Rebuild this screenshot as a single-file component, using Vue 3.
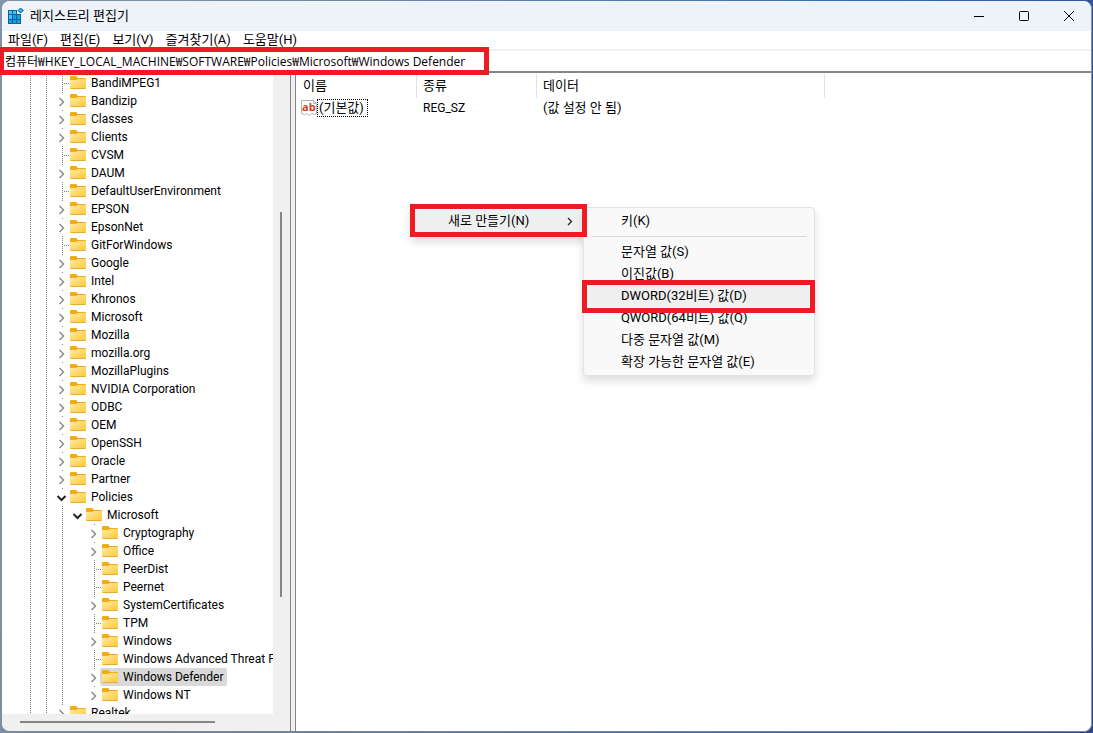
<script setup>
const menus = ['파일(F)', '편집(E)', '보기(V)', '즐겨찾기(A)', '도움말(H)']

const row = (label, level = 0, state = 'closed') => ({ label, level, state })
const rows = [
  row('BandiMPEG1', 0, 'leaf'),
  row('Bandizip'),
  row('Classes'),
  row('Clients'),
  row('CVSM', 0, 'leaf'),
  row('DAUM'),
  row('DefaultUserEnvironment', 0, 'leaf'),
  row('EPSON'),
  row('EpsonNet'),
  row('GitForWindows', 0, 'leaf'),
  row('Google'),
  row('Intel'),
  row('Khronos'),
  row('Microsoft'),
  row('Mozilla'),
  row('mozilla.org'),
  row('MozillaPlugins'),
  row('NVIDIA Corporation'),
  row('ODBC'),
  row('OEM'),
  row('OpenSSH'),
  row('Oracle'),
  row('Partner'),
  row('Policies', 0, 'open'),
  row('Microsoft', 1, 'open'),
  row('Cryptography', 2),
  row('Office', 2),
  row('PeerDist', 2, 'leaf'),
  row('Peernet', 2, 'leaf'),
  row('SystemCertificates', 2),
  row('TPM', 2, 'leaf'),
  row('Windows', 2),
  row('Windows Advanced Threat Protection', 2, 'leaf'),
  row('Windows Defender', 2),
  row('Windows NT', 2),
  row('Realtek'),
]
const selected = 33

// Each guide cell is either a dotted line or blank when the ancestor is a last child.
const guides = (level) => [true, true, true, false].slice(0, 2 + level)

const valueTypes = [
  '문자열 값(S)',
  '이진값(B)',
  'DWORD(32비트) 값(D)',
  'QWORD(64비트) 값(Q)',
  '다중 문자열 값(M)',
  '확장 가능한 문자열 값(E)',
]
const address = '컴퓨터₩HKEY_LOCAL_MACHINE₩SOFTWARE₩Policies₩Microsoft₩Windows Defender'
</script>

<template>
  <div class="desktop">
    <main class="window">
      <header class="titlebar">
        <svg class="app-icon" width="16" height="16" viewBox="0 0 16 16" aria-hidden="true">
          <path d="M0 2h9v4h4v10H0z" fill="#0b62a0" />
          <path d="M1 3h3v3H1zM5 3h3v3H5zM1 7h3v4H1z" fill="#4cc4f2" />
          <path d="M5 7h3v4H5zM9 7h3v4H9zM1 12h3v3H1zM5 12h3v3H5zM9 12h3v3H9z" fill="#18a0dc" />
          <path d="M12.500 0L15.500 2.500L12.500 5L10 2.500z" fill="#2fb0e6" stroke="#0b6fb0" />
        </svg>
        <h1>레지스트리 편집기</h1>
        <div class="controls">
          <button aria-label="최소화"><svg width="12" height="12"><path d="M1 6.500h10" /></svg></button>
          <button aria-label="최대화"><svg width="12" height="12"><rect x="1.500" y="1.500" width="9" height="9" rx="1" /></svg></button>
          <button aria-label="닫기"><svg width="12" height="12"><path d="M1 1l10 10M11 1L1 11" /></svg></button>
        </div>
      </header>

      <nav class="menubar">
        <button v-for="m in menus" :key="m">{{ m }}</button>
      </nav>

      <div class="address">
        <input type="text" :value="address" aria-label="주소" spellcheck="false" />
        <span class="mark"></span>
      </div>

      <div class="panes">
        <section class="left">
          <div class="tree-area">
            <ul class="tree" role="tree">
              <li v-for="(r, i) in rows" :key="i" role="treeitem" :aria-selected="i === selected">
                <span v-for="(g, k) in guides(r.level)" :key="k" class="guide" :class="{ line: g }"></span>
                <svg class="toggle" :class="r.state" width="16" height="18" viewBox="0 0 16 18" aria-hidden="true">
                  <template v-if="r.state === 'leaf'">
                    <path class="dots" d="M8.500 0v18" />
                    <path class="dots" d="M10 9.500h6" />
                  </template>
                  <template v-else>
                    <path v-if="r.level !== 1" class="dots" d="M8.500 0v1" />
                    <path v-if="r.state === 'closed'" class="chevron" d="M5.500 6l4 4l-4 4" />
                    <path v-else class="chevron" d="M3.500 8l4 4l4-4" />
                  </template>
                </svg>
                <button class="key" :class="{ selected: i === selected }">
                  <svg width="16" height="14" viewBox="0 0 16 14" aria-hidden="true">
                    <path d="M0 1q0-1 1-1h5l2 2h7q1 0 1 1v2H0z" fill="#f0ac12" />
                    <path d="M0 4.500q0-.5.5-.5H6l2-1h7.500q.5 0 .5.500V12q0 1-1 1H1q-1 0-1-1z" fill="url(#folder)" />
                    <path d="M.5 12.500h15" stroke="#e8ac2c" />
                  </svg>
                  <span>{{ r.label }}</span>
                </button>
              </li>
            </ul>
            <div class="vscroll"><span></span></div>
          </div>
          <div class="hscroll"><span></span></div>
        </section>
        <section class="right">
          <table>
            <thead>
              <tr><th>이름</th><th>종류</th><th>데이터</th></tr>
            </thead>
            <tbody>
              <tr>
                <td class="name">
                  <div>
                    <svg width="16" height="16" viewBox="0 0 16 16" aria-hidden="true">
                      <path d="M.5.500h12l3 3v10l-2 1l-3-1l-2 2l-3-2l-2 1l-3-1z" fill="#fff" stroke="#b4b4b4" />
                      <path d="M12.500.500v3h3" fill="none" stroke="#b4b4b4" />
                      <text x="1" y="11">ab</text>
                    </svg>
                    <span class="focus">(기본값)</span>
                  </div>
                </td>
                <td class="type">REG_SZ</td>
                <td>(값 설정 안 됨)</td>
              </tr>
            </tbody>
          </table>
        </section>
      </div>
    </main>

    <div class="context">
      <button>새로 만들기(N)
        <svg width="8" height="10" viewBox="0 0 8 10" aria-hidden="true"><path d="M2 2l3.500 3.500L2 9" /></svg>
      </button>
      <span class="mark"></span>
    </div>

    <div class="submenu">
      <button>키(K)</button>
      <hr />
      <div v-for="(t, i) in valueTypes" :key="t" class="entry">
        <button :class="{ hot: i === 2 }">{{ t }}</button>
        <span v-if="i === 2" class="mark"></span>
      </div>
    </div>

    <svg width="0" height="0" class="defs" aria-hidden="true">
      <defs>
        <linearGradient id="folder" x1="0" y1="0" x2="1" y2="1">
          <stop offset="0" stop-color="#ffe9a6" />
          <stop offset="1" stop-color="#ffc937" />
        </linearGradient>
      </defs>
    </svg>
  </div>
</template>

<style>
body { margin: 0; overflow: hidden; }
</style>

<style scoped>
* { box-sizing: border-box; }
button, input {
  font: inherit;
  color: inherit;
  border: 0;
  padding: 0;
  margin: 0;
  background: none;
  text-align: left;
  white-space: nowrap;
}
.desktop {
  position: relative;
  height: 100vh;
  padding: 1px 1px 1px 2px;
  background: linear-gradient(100deg, #8094a8, #7088a4 30%, #3a6cb0 70%, #2c4890);
  font-family: Roboto, "Noto Sans CJK KR", sans-serif;
  font-size: 13px;
  line-height: 18px;
  color: #000;
}
.window {
  height: 100%;
  display: flex;
  flex-direction: column;
  background: #fff;
  border-right: 1px solid #8a9099;
  border-bottom: 1px solid #7f858c;
  border-radius: 8px;
}
.titlebar {
  flex: none;
  height: 30px;
  display: flex;
  align-items: center;
  padding-left: 6px;
  background: #eef3f9;
  border-radius: 8px 8px 0 0;
}
h1 { margin: 0 0 0 6px; font-size: 13px; font-weight: 400; line-height: 18px; }
.controls { margin-left: auto; display: flex; }
.controls button { width: 45px; height: 30px; display: grid; place-items: center; }
.controls path, .controls rect { fill: none; stroke: #000; }
.menubar { flex: none; display: flex; gap: 12px; height: 18px; padding-left: 6px; }
.address {
  position: relative;
  flex: none;
  height: 24px;
  border-top: 2px solid #efefef;
  border-bottom: 2px solid #80868c;
  font-family: "Open Sans", "Noto Sans CJK KR", sans-serif;
  font-size: 12px;
}
.address input { display: block; width: 100%; height: 20px; padding-left: 3px; outline: 0; }
.mark { position: absolute; border: 5px solid #ed1c24; pointer-events: none; z-index: 2; }
.address .mark { left: -3px; top: -4px; width: 490px; height: 28px; }
.panes { flex: 1; min-height: 0; display: flex; background: #f0f0f0; gap: 4px; border-radius: 0 0 8px 8px; overflow: hidden; }
.left { flex: none; width: 289px; display: flex; flex-direction: column; border-right: 1px solid #80868c; }
.tree-area { flex: 1; min-height: 0; display: flex; }
.tree {
  flex: 1;
  min-width: 0;
  margin: 0;
  padding: 1px 0 0 20px;
  list-style: none;
  overflow: hidden;
  background: #fff;
}
.tree li { display: flex; height: 18px; }
.guide { flex: none; width: 16px; }
.guide.line {
  background: repeating-linear-gradient(#808080 0 1px, transparent 1px 2px) 8px 0 / 1px 100% no-repeat;
}
.toggle { flex: none; }
.dots { stroke: #808080; stroke-dasharray: 1 1; fill: none; shape-rendering: crispEdges; }
.chevron { fill: none; stroke: #8c8c8c; stroke-width: 1.5; }
.open .chevron { stroke: #222; stroke-width: 2; }
.key {
  display: flex;
  align-items: center;
  gap: 5px;
  height: 18px;
  margin-left: -2px;
  padding: 0 4px 0 2px;
  border-radius: 2px;
  font-size: 12px;
}
.key svg { flex: none; }
.key.selected { background: #d9d9d9; }
.vscroll { flex: none; width: 17px; padding: 139px 0 0 7px; }
.vscroll span { display: block; width: 2px; height: 385px; background: #858585; }
.hscroll { flex: none; height: 17px; padding: 7px 0 0 18px; }
.hscroll span { display: block; width: 195px; height: 2px; background: #858585; }
.right { flex: 1; min-width: 0; background: #fff; border-left: 1px solid #80868c; }
table { border-collapse: separate; border-spacing: 0; table-layout: fixed; width: 529px; margin-top: 1px; }
th { width: 120px; height: 24px; font-weight: 400; text-align: left; padding: 0 0 0 6px; border-right: 1px solid #e2e2e2; }
th:first-child { width: 121px; padding-left: 7px; }
th:last-child { width: 288px; }
td { padding: 0 0 0 6px; height: 20px; white-space: nowrap; }
td.name { padding-left: 5px; }
td.type { font-size: 12px; }
.name div { display: flex; align-items: center; }
.name text { font: bold 11px "Open Sans", sans-serif; fill: #d4401a; }
.focus { padding: 0 4px 0 2px; outline: 1px dotted #000; outline-offset: -1px; }
.context {
  position: absolute;
  left: 410px;
  top: 204px;
  width: 177px;
  height: 33px;
  padding: 6px 5px 5px;
  background: #f9f9f9;
  box-shadow: 0 5px 8px #0002;
}
.context .mark { inset: 0; }
.context button {
  width: 100%;
  height: 22px;
  padding: 0 8px 0 33px;
  display: flex;
  align-items: center;
  justify-content: space-between;
  border-radius: 3px;
  background: #efefef;
}
.context path { fill: none; stroke: #222; stroke-width: 1.3; }
.submenu {
  position: absolute;
  left: 583px;
  top: 207px;
  width: 232px;
  padding: 2px 5px;
  background: #f9f9f9;
  border: 1px solid #e3e3e3;
  border-radius: 4px;
  box-shadow: 0 5px 8px #0002;
}
.submenu button { display: block; width: 100%; height: 22px; padding-left: 32px; border-radius: 4px; }
.submenu hr { margin: 4px 3px; border: 0; height: 1px; background: #d7d7d7; }
.entry { position: relative; }
.entry .hot { background: #efefef; }
.entry .mark { inset: -5px -6px -6px -7px; }
.defs { position: absolute; }
</style>
